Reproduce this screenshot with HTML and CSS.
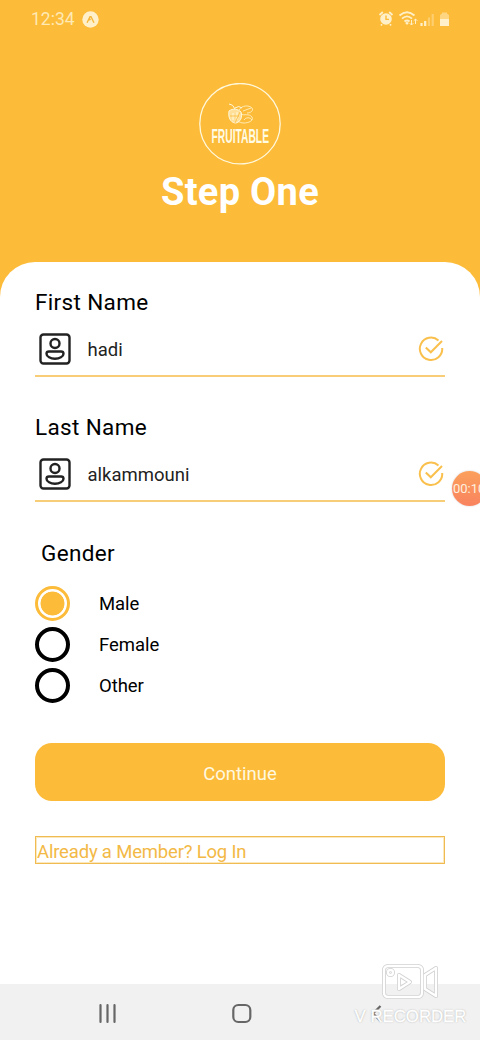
FILE: index.html
```html
<!DOCTYPE html>
<html lang="en">
<head>
<meta charset="utf-8">
<title>Fruitable - Step One</title>
<link rel="stylesheet" href="styles.css">
</head>
<body>
<div class="screen">
  <header class="hero">
    <div class="status">
      <span class="clock">12:34</span>
      <svg class="expo" width="17" height="17" viewBox="0 0 17 17"><circle cx="8.5" cy="8.5" r="8.2" fill="#fff0c9"/><path d="M5 11.800 8 5.800h1l3 6M7.300 9.200l1.200-1.500" fill="none" stroke="#f5b63a" stroke-width="1.400"/></svg>
      <svg class="indicators" width="76" height="20" viewBox="0 0 76 20" fill="none" stroke="#fff0c9">
        <circle cx="10" cy="10" r="5.800" fill="#fff0c9" stroke="none"/>
        <path d="M3.500 6 6.800 3M13.200 3l3.300 3M6 15.200l-1 1.300M14 15.200l1 1.300" stroke-width="1.800"/>
        <path d="M10 6.500v3.900h3" stroke="#fcbb38" stroke-width="1.400"/>
        <path d="M23.500 6.500q7.500-6.500 15 0M26 9.700q5-4.600 10 0M28.500 12.500q2.500-2.100 5 0" stroke-width="1.800"/>
        <path d="m29.200 14 1.800-1.300 1.800 1.300-1.800 2z" fill="#fff0c9" stroke="none"/>
        <path d="M35.500 11v5m-1.800-1.800 1.800 1.800 1.800-1.800M39.500 15v-5m-1.800 1.800 1.800-1.800 1.800 1.800" stroke-width="1"/>
        <path d="M45.500 17v-3M49.200 17v-5" stroke-width="2.200"/>
        <path d="M53 17V8.500M56.700 17V5" stroke-width="2.200" opacity=".38"/>
        <path d="M64 10V6l2-1.500V3.500h5v1L73 6v4z" fill="#fff0c9" stroke="none" opacity=".5"/>
        <path d="M64 10h9v7h-9z" fill="#fff0c9" stroke="none"/>
      </svg>
    </div>
    <div class="brand">
      <svg width="82" height="82" viewBox="0 0 82 82" fill="none" stroke="#fff8dc">
        <circle cx="41" cy="40.700" r="40.200" stroke-width="1.300"/>
        <path d="M30 28c4-3 9-2 12 1 2 5-1 11-6 11-5-1-7-6-6-12z" fill="#fff8dc" fill-opacity=".6" stroke-width="1"/>
        <path d="M30 21q4 0 6 5M36 25q4-3 7 0M34 30v7M38 29v8" stroke-width="1"/>
        <path d="M40 27c3-5 10-5 13-2 2 3-2 5-5 5M42 31c3 2 8-1 11 3 2 4-4 6-8 6-3 0-5-1-6-2M44 28l8-3M45 37c2-3 6-3 8 0" stroke-width="1" opacity=".75"/>
        <path d="m41 29-5 11M31 33h9" stroke="#fcbb38" stroke-width=".8"/>
        <text class="logo-text" x="12.500" y="60.300" textLength="57.500" lengthAdjust="spacingAndGlyphs">FRUITABLE</text>
      </svg>
    </div>
    <h1>Step One</h1>
  </header>

  <main class="sheet">
    <section class="field">
      <label>First Name</label>
      <div class="input">
        <svg class="user" width="32" height="32" viewBox="0 0 32 32" fill="none" stroke="#222" stroke-width="2.400"><rect x="1.500" y="1.500" width="29" height="29" rx="3"/><circle cx="16" cy="10.500" r="4.500"/><path d="M10 18.500h12q2.500 0 2.500 2.200c0 3-4 5-8.500 5s-8.500-2-8.500-5q0-2.200 2.500-2.200z"/></svg>
        <span>hadi</span>
        <svg class="tick" width="26" height="26" viewBox="0 0 26 26" fill="none" stroke="#fac04d" stroke-width="2"><path d="M20.500 4.500A11.200 11.200 0 1 0 24.200 12"/><path d="m7.800 11.500 5 4.800L24 5"/></svg>
      </div>
    </section>
    <section class="field">
      <label>Last Name</label>
      <div class="input">
        <svg class="user" width="32" height="32" viewBox="0 0 32 32" fill="none" stroke="#222" stroke-width="2.400"><rect x="1.500" y="1.500" width="29" height="29" rx="3"/><circle cx="16" cy="10.500" r="4.500"/><path d="M10 18.500h12q2.500 0 2.500 2.200c0 3-4 5-8.500 5s-8.500-2-8.500-5q0-2.200 2.500-2.200z"/></svg>
        <span>alkammouni</span>
        <svg class="tick" width="26" height="26" viewBox="0 0 26 26" fill="none" stroke="#fac04d" stroke-width="2"><path d="M20.500 4.500A11.200 11.200 0 1 0 24.200 12"/><path d="m7.800 11.500 5 4.800L24 5"/></svg>
      </div>
    </section>
    <section class="gender">
      <h2>Gender</h2>
      <div class="option"><i class="radio checked"></i><span>Male</span></div>
      <div class="option"><i class="radio"></i><span>Female</span></div>
      <div class="option"><i class="radio"></i><span>Other</span></div>
    </section>
    <div class="continue"><span>Continue</span></div>
    <div class="login"><span>Already a Member? Log In</span></div>
  </main>

  <nav class="navbar">
    <svg width="480" height="56" viewBox="0 0 480 56" fill="none" stroke="#666" stroke-width="2.200"><path d="M100.500 21v17M107.500 21v17M114.500 21v17" stroke-linecap="round"/><rect x="233.300" y="21" width="17" height="17" rx="5"/><path d="m380.500 22-7.500 7.500 7.500 7.500"/></svg>
  </nav>

  <div class="timer"><span>00:10</span></div>
  <div class="watermark">
    <svg width="58" height="38" viewBox="0 0 58 38" fill="none" stroke-linejoin="round">
      <g stroke="#d0d0d0" stroke-width="4"><rect x="3" y="3" width="38" height="31" rx="4"/><path d="m44 12 11-7v28l-11-7zM18 12l11 7-11 7z"/><circle cx="9.500" cy="9.500" r="2.500"/></g>
      <g stroke="#fff" stroke-width="2.400"><rect x="3" y="3" width="38" height="31" rx="4"/><path d="m44 12 11-7v28l-11-7zM18 12l11 7-11 7z"/><circle cx="9.500" cy="9.500" r="2.500"/></g>
    </svg>
    <span>V RECORDER</span>
  </div>
</div>
</body>
</html>
```
FILE: styles.css
```css
* { box-sizing: border-box; }
body { margin: 0; font-family: Roboto, sans-serif; color: #000; }
.screen { position: relative; width: 480px; height: 1040px; overflow: hidden; display: flex; flex-direction: column; background: #fcbb38; }
.hero { height: 262px; flex: none; display: flex; flex-direction: column; align-items: center; }
.status { width: 100%; height: 38px; padding: 0 28px 0 31px; display: flex; align-items: center; color: #ffe9b5; }
.clock { font-size: 17.5px; line-height: 20px; width: 51px; }
.indicators { margin-left: auto; }
.brand { margin-top: 45px; height: 82px; }
.brand svg { display: block; }
.logo-text { font: bold 20px "Liberation Sans", sans-serif; fill: #fffbe5; stroke: none; }
h1 { margin: 4px 0 0; font-size: 38px; line-height: 46px; font-weight: 700; color: #fff; letter-spacing: .3px; }
.sheet { flex: 1; background: #fff; border-radius: 35px 35px 0 0; padding: 26px 35px 0; }
.field { height: 125px; }
.field label { display: block; font-size: 22.5px; line-height: 28px; letter-spacing: .35px; }
.input { height: 61px; border-bottom: 2px solid #f7cd78; padding: 17px 2px 0 4px; display: flex; align-items: flex-start; color: #222; }
.input span { font-size: 18.5px; line-height: 34px; letter-spacing: 0; margin-left: 16.5px; }
.tick { margin: 3px -1px 0 auto; }
.gender { padding-top: 1px; }
.gender h2 { margin: 0 0 16px 6px; font-size: 22.5px; line-height: 28px; font-weight: 400; letter-spacing: .35px; }
.option { height: 41px; display: flex; align-items: center; gap: 29px; font-size: 18.5px; letter-spacing: -.05px; }
.radio { width: 35px; height: 35px; border: 4px solid #000; border-radius: 50%; }
.checked { border-color: #fcbb38; border-width: 3px; background: radial-gradient(circle, #fcbb38 11.6px, #fff 12.3px) padding-box; }
.continue { height: 58px; margin-top: 37px; border-radius: 17px; background: #fcbb38; color: #fff8e0; display: flex; align-items: center; justify-content: center; font-size: 18.5px; padding-top: 3px; letter-spacing: 0; }
.login { height: 28px; margin-top: 35px; border: 1px solid #f0bb50; box-shadow: inset 0 0 0 1px #fce8be; color: #f3b946; font-size: 18.5px; line-height: 30px; padding-left: 1px; letter-spacing: -.18px; }
.navbar { height: 56px; flex: none; background: #f1f1f1; }
.navbar svg { display: block; }
.timer { position: absolute; left: 452px; top: 471px; width: 35px; height: 35px; border-radius: 50%; background: linear-gradient(#fba05c, #f9835f); color: #fff0df; font-size: 13px; line-height: 35px; padding-left: 1px; box-shadow: 0 0 2px #ccc; white-space: nowrap; }
.watermark { position: absolute; left: 354px; top: 963px; width: 113px; display: flex; flex-direction: column; align-items: center; color: #fff; font: 17px/22px "Liberation Sans", sans-serif; text-shadow: 0 0 1px #aaa, 0 0 2px #bbb; white-space: nowrap; }
.watermark svg { margin-right: 2px; }
.watermark span { margin-top: 5px; font-size: 16.8px; -webkit-text-stroke: .4px #fff; }
```
